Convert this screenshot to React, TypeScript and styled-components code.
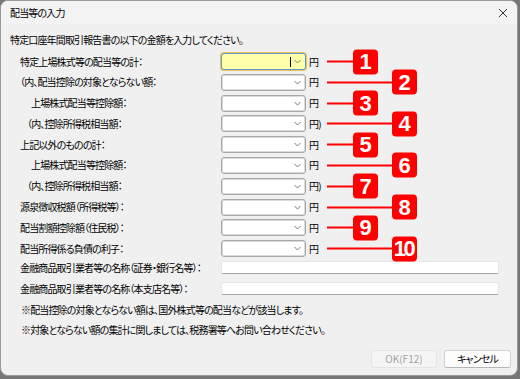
import React from "react";
import styled, { createGlobalStyle } from "styled-components";

const Global = createGlobalStyle`
  html, body { margin: 0; padding: 0; background: #767676; }
  body { width: 520px; height: 379px; overflow: hidden; }
`;

const Window = styled.div`
  width: 518px;
  height: 376px;
  box-sizing: border-box;
  border: 1px solid #9a9a9a;
  border-radius: 8px;
  background: #f0f0f0;
  display: flex;
  flex-direction: column;
  overflow: hidden;
  font-family: "Noto Sans CJK JP", "Noto Sans", sans-serif;
  font-size: 10px;
  letter-spacing: -0.85px;
  font-feature-settings: "palt";
  color: #000;
  line-height: 14px;
`;

const TitleBar = styled.div`
  height: 23px;
  flex: none;
  display: flex;
  align-items: center;
  justify-content: space-between;
  padding: 0 5px 0 9px;
  background: #f3f3f3;
`;

const CloseButton = styled.div`
  width: 12px;
  height: 12px;
  display: flex;
  align-items: center;
  justify-content: center;
  margin-right: 3px;
`;

const Body = styled.div`
  display: flex;
  flex-direction: column;
  padding: 9px 0 0 9px;
  flex: 1;
`;

const Intro = styled.div`
  height: 14px;
`;

const Form = styled.div`
  display: grid;
  grid-template-columns: 201px 1fr;
  grid-auto-rows: 17px;
  row-gap: 3.8px;
  padding-left: 10px;
  margin-top: 6px;
  margin-right: 18px;
`;

const Label = styled.div<{ $indent: number }>`
  display: flex;
  align-items: center;
  padding-left: ${(p) => p.$indent}px;
  white-space: nowrap;
`;

const Field = styled.div`
  position: relative;
  display: flex;
  align-items: center;
`;

const Combo = styled.div<{ $focus?: boolean }>`
  position: relative;
  width: 85px;
  height: 17px;
  box-sizing: border-box;
  border: 1px solid ${(p) => (p.$focus ? "#5a9ad8" : "#a8a8a8")};
  border-radius: 3px;
  background: ${(p) => (p.$focus ? "#ffffa8" : "#ffffff")};
  box-shadow: ${(p) =>
    p.$focus ? "0 0 0 1px #f0c24e" : "inset 0 0 0 1px #dadada"};
  display: flex;
  align-items: center;
  justify-content: flex-end;
  padding-right: 4px;
  gap: 3px;
`;

const Caret = styled.div`
  width: 1px;
  height: 10px;
  background: #000;
`;

const Suffix = styled.span`
  margin-left: 3px;
`;

const Annotation = styled.div`
  position: absolute;
  left: 106px;
  top: 50%;
  transform: translateY(-50%);
  display: flex;
  align-items: center;
`;

const Leader = styled.div<{ $long: boolean }>`
  width: ${(p) => (p.$long ? 65 : 26)}px;
  height: 2px;
  background: #ff0000;
`;

const Badge = styled.div<{ $wide: boolean }>`
  width: 25px;
  height: 25px;
  border-radius: 4px;
  background: #ff0000;
  color: #fff;
  display: flex;
  align-items: center;
  justify-content: center;
  font-family: "Liberation Sans", Arial, sans-serif;
  font-weight: bold;
  font-size: 22px;
  line-height: 1;
  letter-spacing: ${(p) => (p.$wide ? "-2.5px" : "0")};
  font-feature-settings: normal;
  padding-right: ${(p) => (p.$wide ? "2px" : "0")};
  box-sizing: border-box;
`;

const Inputs = styled.div`
  display: grid;
  grid-template-columns: 201px 278px;
  grid-auto-rows: 13px;
  row-gap: 8px;
  padding-left: 10px;
  margin-top: 4px;
`;

const TextBox = styled.div`
  height: 13px;
  box-sizing: border-box;
  background: #fff;
  border: 1px solid #e6e6e6;
  border-bottom: 1px solid #a4a4a4;
  border-radius: 2px;
`;

const Notes = styled.div`
  display: flex;
  flex-direction: column;
  gap: 6px;
  padding-left: 11px;
  margin-top: 8px;
`;

const Footer = styled.div`
  display: flex;
  justify-content: flex-end;
  gap: 7px;
  padding-right: 6px;
  margin-top: 13px;
`;

const Button = styled.div<{ $disabled?: boolean }>`
  width: ${(p) => (p.$disabled ? 66 : 67)}px;
  height: 18px;
  box-sizing: border-box;
  border: 1px solid ${(p) => (p.$disabled ? "#e4e4e4" : "#d2d2d2")};
  border-bottom-color: ${(p) => (p.$disabled ? "#e4e4e4" : "#b6b6b6")};
  border-radius: 3px;
  background: ${(p) => (p.$disabled ? "#f5f5f5" : "#fdfdfd")};
  color: ${(p) => (p.$disabled ? "#a2a2a2" : "#000")};
  letter-spacing: ${(p) => (p.$disabled ? "0" : "-0.85px")};
  display: flex;
  align-items: center;
  justify-content: center;
`;

type Row = { label: string; indent: number; suffix?: string; focus?: boolean };

const rows: Row[] = [
  { label: "特定上場株式等の配当等の計：", indent: 0, focus: true },
  { label: "（内、配当控除の対象とならない額：", indent: 0 },
  { label: "上場株式配当等控除額：", indent: 11 },
  { label: "（内、控除所得税相当額：", indent: 7, suffix: "円)" },
  { label: "上記以外のものの計：", indent: 0 },
  { label: "上場株式配当等控除額：", indent: 11 },
  { label: "（内、控除所得税相当額：", indent: 7, suffix: "円)" },
  { label: "源泉徴収税額（所得税等）：", indent: 0 },
  { label: "配当割額控除額（住民税）：", indent: 0 },
  { label: "配当所得係る負債の利子：", indent: 0 },
];

const Chevron = () => (
  <svg width="7" height="5" viewBox="0 0 7 5">
    <polyline points="0.5,1 3.5,4 6.5,1" fill="none" stroke="#7a7a7a" strokeWidth="1" />
  </svg>
);

export default function App() {
  return (
    <>
      <Global />
      <Window>
        <TitleBar>
          <span>配当等の入力</span>
          <CloseButton>
            <svg width="10" height="10" viewBox="0 0 10 10">
              <path d="M1 1 L9 9 M9 1 L1 9" stroke="#333" strokeWidth="1" />
            </svg>
          </CloseButton>
        </TitleBar>
        <Body>
          <Intro>特定口座年間取引報告書の以下の金額を入力してください。</Intro>
          <Form>
            {rows.map((r, i) => (
              <React.Fragment key={i}>
                <Label $indent={r.indent}>{r.label}</Label>
                <Field>
                  <Combo $focus={r.focus}>
                    {r.focus && <Caret />}
                    <Chevron />
                  </Combo>
                  <Suffix>{r.suffix ?? "円"}</Suffix>
                  <Annotation>
                    <Leader $long={i % 2 === 1} />
                    <Badge $wide={i + 1 >= 10}>{i + 1}</Badge>
                  </Annotation>
                </Field>
              </React.Fragment>
            ))}
          </Form>
          <Inputs>
            <Label $indent={0}>金融商品取引業者等の名称（証券・銀行名等）：</Label>
            <TextBox />
            <Label $indent={0}>金融商品取引業者等の名称（本支店名等）：</Label>
            <TextBox />
          </Inputs>
          <Notes>
            <div>※配当控除の対象とならない額は、国外株式等の配当などが該当します。</div>
            <div>※対象とならない額の集計に関しましては、税務署等へお問い合わせください。</div>
          </Notes>
          <Footer>
            <Button $disabled>OK(F12)</Button>
            <Button>キャンセル</Button>
          </Footer>
        </Body>
      </Window>
    </>
  );
}
